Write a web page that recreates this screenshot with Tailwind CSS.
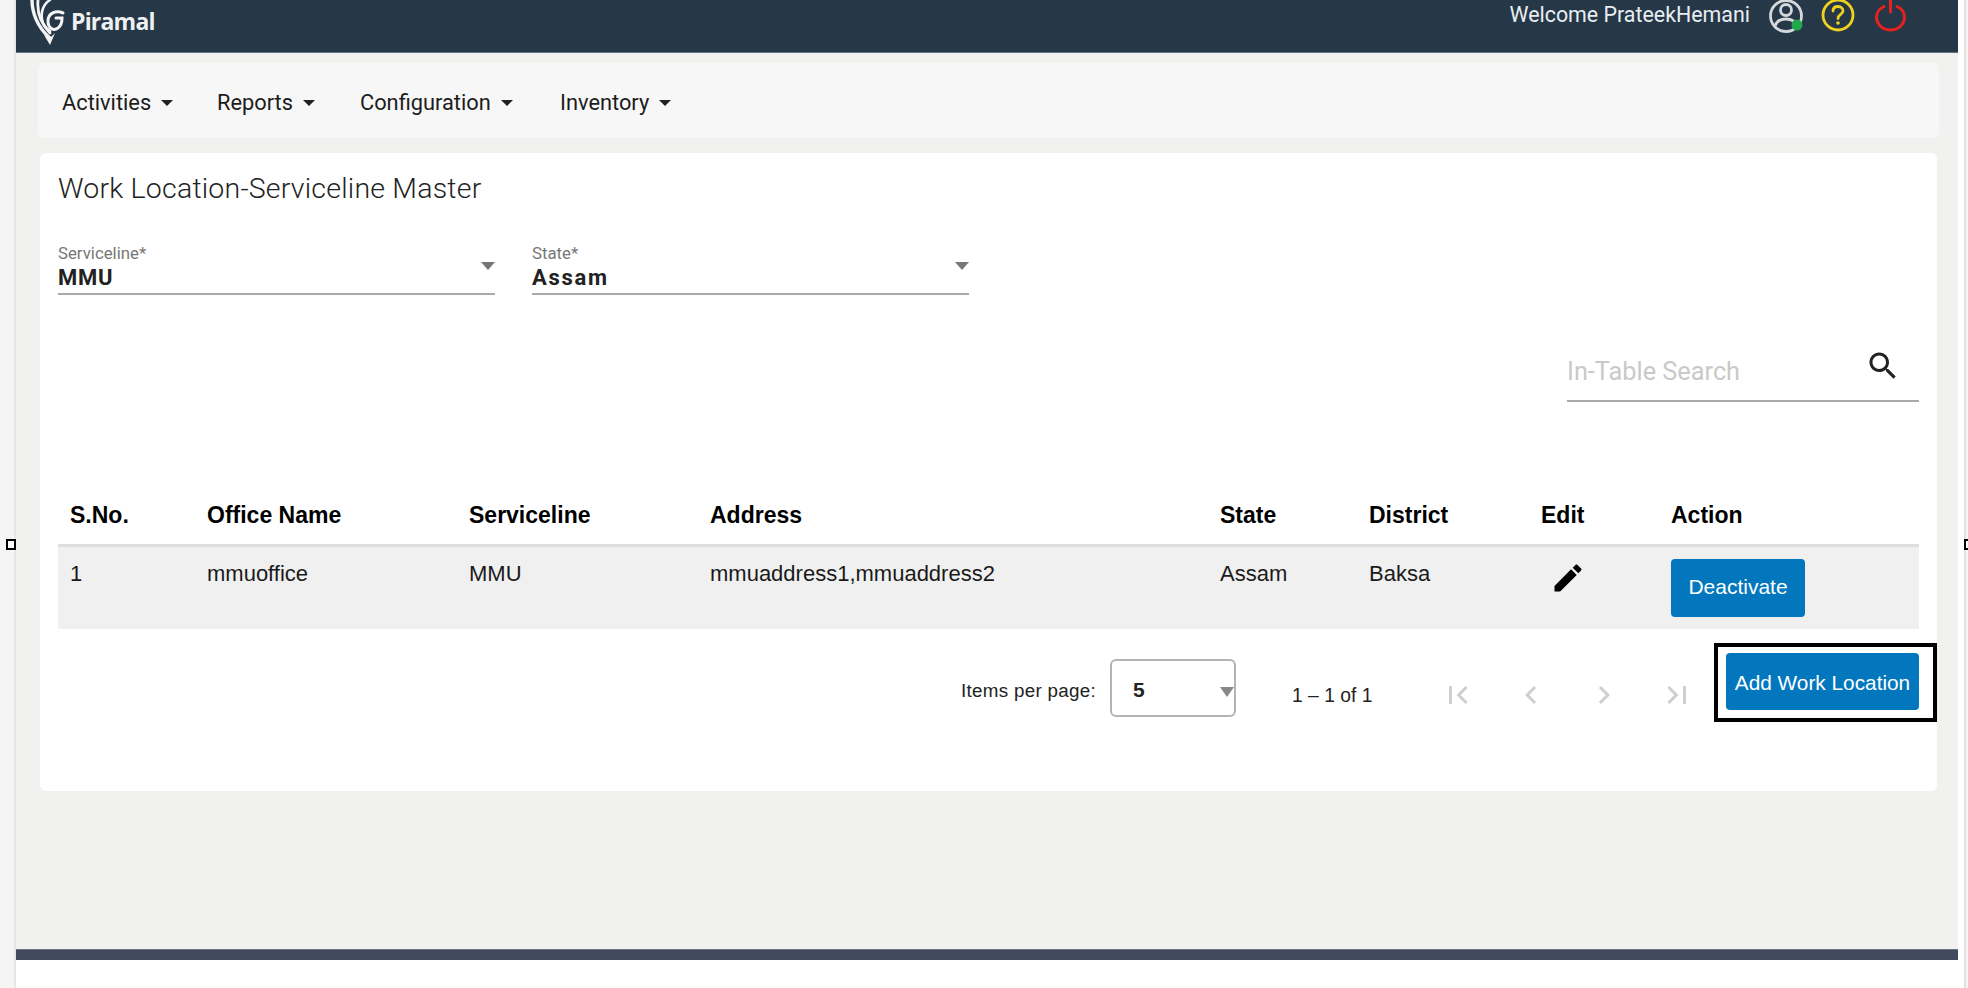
<!DOCTYPE html>
<html>
<head>
    <meta charset="UTF-8">
    <meta name="viewport" content="width=device-width, initial-scale=1.0">
    <title>Work Location-Serviceline Master</title>
    <script src="https://cdn.jsdelivr.net/npm/@tailwindcss/browser@4"></script>
</head>
<body class="relative h-screen overflow-hidden flex bg-[#f5f5f5] font-['Roboto',sans-serif]">
    <!-- handles of the screenshot tool -->
    <div class="absolute left-[6px] top-[539px] w-[10px] h-[11px] border-2 border-black bg-white"></div>
    <div class="absolute left-[1964px] top-[539px] w-[10px] h-[11px] border-2 border-black bg-white"></div>

    <div class="w-[16px] shrink-0 border-r-2 border-[#e6e6e6]"></div>
    <div class="w-[1942px] shrink-0 flex flex-col bg-white">
        <header class="h-[53px] shrink-0 bg-[#263747] border-b border-[#66727f] flex justify-between overflow-hidden">
            <div class="flex items-start pl-[14px]">
                <svg class="w-[36px] h-[48px] -mt-[1px]" viewBox="0 0 36 48" fill="none" stroke="#f4f4f4" stroke-linecap="round">
                    <path d="M2 1C2 13 7 28 20 39" stroke-width="3.400"/>
                    <path d="M8 1C7 12 10 24 20 34" stroke-width="2.800"/>
                    <path d="M20 1C12 6 10 16 13 24C15 28 17 30 20 32" stroke-width="2.600"/>
                    <path d="M33 14C26 11 18 14 18 22C18 30 24 32 28 29C31 27 32 23 32 19L26 19" stroke-width="3"/>
                    <path d="M14 36L20 46L25 34L20 39Z" fill="#f4f4f4" stroke="none"/>
                </svg>
                <span class="ml-[5px] mt-[6px] text-[23px] leading-[30px] font-bold text-[#eef0f2] font-['Open_Sans',sans-serif] tracking-[-0.8px]">Piramal</span>
            </div>
            <div class="flex items-start">
                <span class="mt-[1px] text-[21.400px] leading-[27px] text-[#e8eef2]">Welcome PrateekHemani</span>
                <svg class="ml-[18px] w-[36px] h-[36px] -mt-[2px]" viewBox="0 0 36 36" fill="none" stroke="#d4d8da" stroke-width="2.800">
                    <circle cx="18" cy="18" r="15.500"/>
                    <circle cx="18" cy="12" r="5.500"/>
                    <path d="M7 28C9 22 13 21 18 21C23 21 27 22 29 28"/>
                    <circle cx="29" cy="27" r="5.500" fill="#21a84a" stroke="none"/>
                </svg>
                <svg class="ml-[17px] w-[34px] h-[34px] -mt-[2px]" viewBox="0 0 34 34" fill="none" stroke="#efd21f" stroke-width="2.800">
                    <circle cx="17" cy="17" r="15"/>
                    <path d="M12 13C12 10 14 8.500 17 8.500C20 8.500 22 10.500 22 13C22 16.500 17 16.500 17 20.500" stroke-linecap="round"/>
                    <circle cx="17" cy="25" r="1.800" fill="#efd21f" stroke="none"/>
                </svg>
                <svg class="ml-[20px] mr-[51px] w-[32px] h-[32px]" viewBox="0 0 32 32" fill="none" stroke="#e2231f" stroke-width="3" stroke-linecap="round">
                    <path d="M9 6.500C4 9 1.500 13 1.500 17C1.500 24.500 8 30 15.500 30C23 30 29.500 24.500 29.500 17C29.500 13 27 9 22 6.500"/>
                    <path d="M15.500 0V12"/>
                </svg>
            </div>
        </header>

        <main class="flex-1 bg-[#f1f1ef] pt-[10px] pl-[22px]">
            <nav class="w-[1901px] h-[75px] bg-[#f7f7f7] rounded-md flex items-center pl-[24px] pt-[5px] text-[21.800px] text-[#1c1c1c]">
                <div class="w-[155px] flex items-center gap-[10px]">Activities <span class="w-0 h-0 border-x-[6px] border-t-[6px] border-x-transparent border-t-[#222]"></span></div>
                <div class="w-[143px] flex items-center gap-[10px]">Reports <span class="w-0 h-0 border-x-[6px] border-t-[6px] border-x-transparent border-t-[#222]"></span></div>
                <div class="w-[200px] flex items-center gap-[10px]">Configuration <span class="w-0 h-0 border-x-[6px] border-t-[6px] border-x-transparent border-t-[#222]"></span></div>
                <div class="flex items-center gap-[10px]">Inventory <span class="w-0 h-0 border-x-[6px] border-t-[6px] border-x-transparent border-t-[#222]"></span></div>
            </nav>

            <section class="ml-[2px] mt-[15px] w-[1897px] h-[638px] bg-white rounded-md pt-[21px] px-[18px]">
                <h1 class="text-[28.500px] leading-[30px] font-light text-[#222] tracking-[0.2px]">Work Location-Serviceline Master</h1>

                <div class="mt-[39px] flex gap-[37px]">
                    <div class="relative w-[437px] h-[52px] border-b-2 border-[#aaa]">
                        <div class="text-[16.800px] leading-[20px] text-[#777]">Serviceline*</div>
                        <div class="mt-[2px] text-[22px] leading-[26px] font-bold text-[#222] tracking-[0.7px]">MMU</div>
                        <span class="absolute right-0 top-[19px] w-0 h-0 border-x-[7px] border-t-[8px] border-x-transparent border-t-[#777]"></span>
                    </div>
                    <div class="relative w-[437px] h-[52px] border-b-2 border-[#aaa]">
                        <div class="text-[16.800px] leading-[20px] text-[#777]">State*</div>
                        <div class="mt-[2px] text-[22px] leading-[26px] font-bold text-[#222] tracking-[1.7px]">Assam</div>
                        <span class="absolute right-0 top-[19px] w-0 h-0 border-x-[7px] border-t-[8px] border-x-transparent border-t-[#777]"></span>
                    </div>
                </div>

                <div class="mt-[55px] flex justify-end">
                    <div class="relative w-[352px] h-[52px] border-b-2 border-[#aaa] pt-[8px]">
                        <span class="text-[25.300px] leading-[28px] text-[#c9c9c9]">In-Table Search</span>
                        <svg class="absolute right-[18px] -top-[2px] w-[36px] h-[36px]" viewBox="0 0 24 24" fill="#222">
                            <path d="M15.500 14h-.79l-.28-.27C15.410 12.590 16 11.110 16 9.500 16 5.910 13.090 3 9.500 3S3 5.910 3 9.500 5.910 16 9.500 16c1.610 0 3.090-.59 4.230-1.570l.27.28v.79l5 4.990L20.490 19l-4.990-5zm-6 0C7.010 14 5 11.990 5 9.500S7.010 5 9.500 5 14 7.010 14 9.500 11.990 14 9.500 14z"/>
                        </svg>
                    </div>
                </div>

                <table class="mt-[88px] w-[1861px] table-fixed font-['Liberation_Sans',sans-serif] text-left">
                    <colgroup>
                        <col class="w-[137px]"><col class="w-[262px]"><col class="w-[241px]"><col class="w-[510px]"><col class="w-[149px]"><col class="w-[172px]"><col class="w-[130px]"><col class="w-[260px]">
                    </colgroup>
                    <thead>
                        <tr class="h-[55px] border-b-[3px] border-[#dedede] text-[23px] text-black">
                            <th class="pl-[12px] pb-[3px] font-bold">S.No.</th>
                            <th class="pl-[12px] pb-[3px] font-bold">Office Name</th>
                            <th class="pl-[12px] pb-[3px] font-bold">Serviceline</th>
                            <th class="pl-[12px] pb-[3px] font-bold">Address</th>
                            <th class="pl-[12px] pb-[3px] font-bold">State</th>
                            <th class="pl-[12px] pb-[3px] font-bold">District</th>
                            <th class="pl-[12px] pb-[3px] font-bold">Edit</th>
                            <th class="pl-[12px] pb-[3px] font-bold">Action</th>
                        </tr>
                    </thead>
                    <tbody>
                        <tr class="h-[84px] bg-[#f0f0f0] text-[22px] text-[#1a1a1a] align-top">
                            <td class="pl-[12px] pt-[10px]">1</td>
                            <td class="pl-[12px] pt-[10px]">mmuoffice</td>
                            <td class="pl-[12px] pt-[10px]">MMU</td>
                            <td class="pl-[12px] pt-[10px]">mmuaddress1,mmuaddress2</td>
                            <td class="pl-[12px] pt-[10px]">Assam</td>
                            <td class="pl-[12px] pt-[10px]">Baksa</td>
                            <td class="pl-[21px] pt-[13px]">
                                <svg class="w-[36px] h-[36px]" viewBox="0 0 24 24" fill="#000">
                                    <path d="M3 17.250V21h3.750L17.810 9.940l-3.750-3.750L3 17.250zM20.710 7.040c.39-.39.39-1.020 0-1.410l-2.340-2.340c-.39-.39-1.020-.39-1.410 0l-1.830 1.830 3.750 3.750 1.830-1.830z"/>
                                </svg>
                            </td>
                            <td class="pl-[12px] pt-[12px]">
                                <button class="w-[134px] h-[58px] pb-[2px] bg-[#0277bd] rounded text-white text-[21px]">Deactivate</button>
                            </td>
                        </tr>
                    </tbody>
                </table>

                <div class="mt-[14px] -mr-[18px] flex justify-end">
                    <div class="flex items-start h-[79px] font-['Liberation_Sans',sans-serif]">
                        <span class="mt-[37px] text-[18.800px] leading-[22px] text-[#222] tracking-[0.3px]">Items per page:</span>
                        <div class="relative ml-[14px] mt-[16px] w-[126px] h-[58px] border-2 border-[#b4b4b4] rounded-md bg-white">
                            <span class="absolute left-[21px] top-[16px] text-[21px] leading-[26px] font-bold text-[#222]">5</span>
                            <span class="absolute right-0 top-[26px] w-0 h-0 border-x-[7px] border-t-[10px] border-x-transparent border-t-[#888]"></span>
                        </div>
                        <span class="ml-[56px] mt-[42px] w-[80px] text-[19.300px] leading-[22px] text-[#222] whitespace-nowrap">1 – 1 of 1</span>
                        <div class="ml-[68px] mt-[34px] flex gap-[37px] text-[#cfcfcf]">
                            <svg class="w-[36px] h-[36px]" viewBox="0 0 24 24" fill="currentColor"><path d="M18.410 16.590L13.820 12l4.590-4.590L17 6l-6 6 6 6zM6 6h2v12H6z"/></svg>
                            <svg class="w-[36px] h-[36px]" viewBox="0 0 24 24" fill="currentColor"><path d="M15.410 7.410L14 6l-6 6 6 6 1.410-1.410L10.830 12z"/></svg>
                            <svg class="w-[36px] h-[36px]" viewBox="0 0 24 24" fill="currentColor"><path d="M10 6L8.590 7.410 13.170 12l-4.580 4.590L10 18l6-6z"/></svg>
                            <svg class="w-[36px] h-[36px]" viewBox="0 0 24 24" fill="currentColor"><path d="M5.590 7.410L10.180 12l-4.590 4.590L7 18l6-6-6-6zM16 6h2v12h-2z"/></svg>
                        </div>
                        <div class="ml-[19px] w-[223px] h-[79px] border-4 border-black pt-[6px] pl-[8px]">
                            <button class="w-[193px] h-[57px] pt-[2px] bg-[#0277bd] rounded text-white text-[20.800px] font-['Liberation_Sans',sans-serif] whitespace-nowrap">Add Work Location</button>
                        </div>
                    </div>
                </div>
            </section>
        </main>

        <footer class="h-[39px] shrink-0 bg-white">
            <div class="h-[11px] bg-[#424b5e] border-t border-[#6b7384]"></div>
        </footer>
    </div>
    <div class="w-[6px] shrink-0 bg-white"></div>
    <div class="w-[2px] shrink-0 bg-[#e2e2e2]"></div>
</body>
</html>
